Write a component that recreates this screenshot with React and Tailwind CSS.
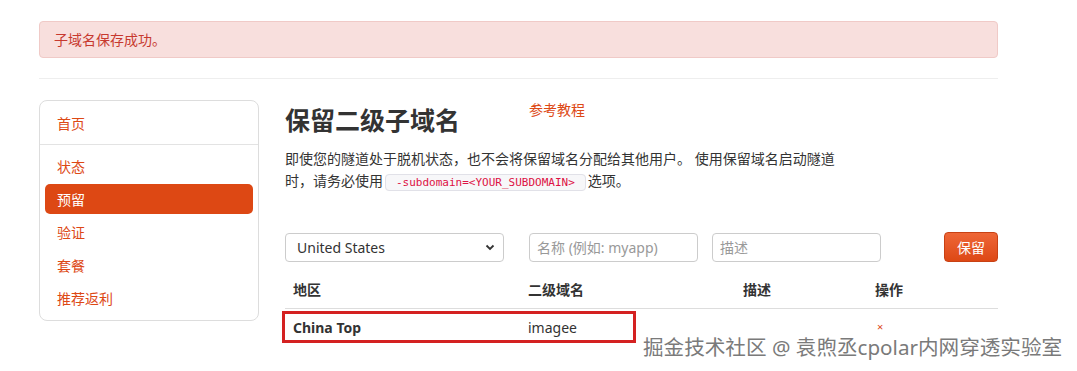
const FONT = "font-['Noto_Sans','Noto_Sans_CJK_SC',sans-serif]"

const navItems = ['状态', '预留', '验证', '套餐', '推荐返利']

export default function App() {
  return (
    <div className={`relative h-[371px] w-[1077px] overflow-hidden bg-white text-[14px] text-[#333] ${FONT}`}>
      <div className="ml-[39px] w-[959px] pt-[21px]">
        <div className="flex h-[37px] items-center rounded-[4px] border border-[#f0cac7] bg-[#f8dfdd] px-[14px] text-[#c7392f]">
          子域名保存成功。
        </div>
        <div className="mt-[20px] h-px bg-[#eeeeee]" />

        <div className="mt-[21px] flex gap-[26px]">
          <Sidebar />
          <Main />
        </div>
      </div>

      <div className="absolute left-[643px] top-[333px] text-[20.6px] leading-[28px] text-[#7a7a7a] [text-shadow:1px_1px_0_#fff,-1px_-1px_0_#fff,1px_-1px_0_#fff,-1px_1px_0_#fff]">
        掘金技术社区 @ 袁煦丞cpolar内网穿透实验室
      </div>
    </div>
  )
}

function Sidebar() {
  return (
    <div className="h-[221px] w-[220px] shrink-0 rounded-[8px] border border-[#dddddd] px-[5px] py-[7px]">
      <a className="flex h-[30px] items-center px-[12px] text-[#dd4814]">首页</a>
      <div className="-mx-[5px] my-[6px] h-px bg-[#e3e3e3]" />
      <div className="flex flex-col gap-[3px]">
        {navItems.map((item) => (
          <a
            key={item}
            className={
              item === '预留'
                ? 'flex h-[30px] items-center rounded-[5px] bg-[#dd4814] px-[12px] text-white'
                : 'flex h-[30px] items-center px-[12px] text-[#dd4814]'
            }
          >
            {item}
          </a>
        ))}
      </div>
    </div>
  )
}

function Main() {
  return (
    <div className="w-[713px]">
      <div className="flex items-start">
        <h1 className="mt-[2px] w-[244px] text-[25px] font-bold leading-[36px] text-[#333]">保留二级子域名</h1>
        <a className="leading-[20px] text-[#dd4814]">参考教程</a>
      </div>

      <p className="mt-[10px] w-[562px] leading-[22px]">
        即使您的隧道处于脱机状态，也不会将保留域名分配给其他用户。 使用保留域名启动隧道时，请务必使用
        <code className="mx-[2px] rounded-[4px] border border-[#e1e1e8] bg-[#f7f7f9] px-[10px] py-[1px] font-['DejaVu_Sans_Mono',monospace] text-[11px] leading-[16px] text-[#dd1144]">
          -subdomain=&lt;YOUR_SUBDOMAIN&gt;
        </code>
        选项。
      </p>

      <div className="mt-[40px] flex items-center">
        <div className="flex h-[29px] w-[219px] items-center justify-between rounded-[4px] border border-[#cccccc] pl-[11px] pr-[8px] text-[#333]">
          <span>United States</span>
          <svg width="10" height="10" viewBox="0 0 10 10" fill="none">
            <path d="M1.5 3.5 5 7l3.5-3.5" stroke="#333" strokeWidth="1.8" />
          </svg>
        </div>
        <div className="ml-[25px] flex h-[29px] w-[169px] items-center rounded-[4px] border border-[#cccccc] px-[7px] text-[#999]">
          名称 (例如: myapp)
        </div>
        <div className="ml-[14px] flex h-[29px] w-[169px] items-center rounded-[4px] border border-[#cccccc] px-[7px] text-[#999]">
          描述
        </div>
        <button className="ml-auto flex h-[30px] w-[54px] items-center justify-center rounded-[4px] border border-[#c84114] bg-gradient-to-b from-[#ee6636] to-[#dd4814] text-white">
          保留
        </button>
      </div>

      <div className="relative mt-[9px]">
        <div className="flex h-[38px] items-center border-b border-[#dddddd] font-bold">
          <div className="w-[235px] px-[8px]">地区</div>
          <div className="w-[215px] px-[8px]">二级域名</div>
          <div className="w-[132px] px-[8px]">描述</div>
          <div className="w-[131px] px-[8px]">操作</div>
        </div>
        <div className="flex h-[36px] items-center">
          <div className="w-[235px] px-[8px] font-bold">China Top</div>
          <div className="w-[215px] px-[8px]">imagee</div>
          <div className="w-[132px] px-[8px]" />
          <div className="w-[131px] px-[10px] text-[11px] text-[#dd4814]">×</div>
        </div>
        <div className="absolute left-[-3px] top-[40px] h-[32px] w-[354px] border-[3px] border-[#d42121]" />
      </div>
    </div>
  )
}
